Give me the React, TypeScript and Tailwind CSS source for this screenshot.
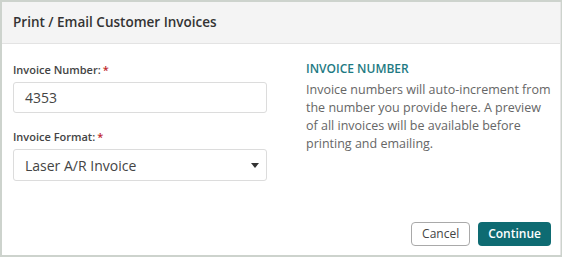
export default function App() {
  return (
    <div className="w-[562px] h-[257px] bg-[#cdd3cd] p-[2px] pr-[1px] pb-[2px]" style={{ fontFamily: '"Open Sans", "Liberation Sans", sans-serif' }}>
      <div className="h-full bg-white flex flex-col border-r border-[#e6e6e6]">
        {/* Header */}
        <div className="h-[42px] bg-[#f4f4f4] border-b border-[#e3e3e3] flex items-center px-[11px]">
          <h1 className="text-[13.5px] font-semibold text-[#333]">Print / Email Customer Invoices</h1>
        </div>

        <div className="flex-1 flex pl-[11px] pr-[6px] pt-[18px]">
          {/* Form */}
          <div className="w-[254px] flex flex-col">
            <label className="text-[11px] font-semibold text-[#444] leading-[16px]">
              Invoice Number:<span className="text-[#c0272d] ml-[2px]">*</span>
            </label>
            <div className="mt-[4px] h-[31px] border border-[#dcdcdc] rounded-[3px] flex items-center px-[11px] text-[14px] text-[#444]">
              4353
            </div>
            <label className="mt-[16px] text-[11px] font-semibold text-[#444] leading-[16px]">
              Invoice Format:<span className="text-[#c0272d] ml-[2px]">*</span>
            </label>
            <div className="mt-[4px] h-[32px] border border-[#dcdcdc] rounded-[3px] flex items-center justify-between pl-[11px] pr-[7px] text-[14px] text-[#444]">
              <span>Laser A/R Invoice</span>
              <svg width="8" height="5" viewBox="0 0 8 5">
                <path d="M0 0h8L4 5z" fill="#333" />
              </svg>
            </div>
          </div>

          {/* Help */}
          <div className="ml-[39px] flex-1">
            <h2 className="text-[12px] font-semibold text-[#1e7a83] leading-[16px] mt-[-1px]">INVOICE NUMBER</h2>
            <p className="mt-[4px] text-[12.5px] leading-[18px] text-[#666]">
              Invoice numbers will auto-increment from the number you provide here. A preview of all invoices will be available before printing and emailing.
            </p>
          </div>
        </div>

        {/* Footer */}
        <div className="flex justify-end gap-[8px] pr-[9px] pb-[9px]">
          <button className="h-[24px] px-[10px] border border-[#a9a9a9] rounded-[4px] bg-white text-[12px] text-[#444]">Cancel</button>
          <button className="h-[24px] px-[10px] rounded-[4px] bg-[#0e6b72] text-[12px] font-semibold text-white">Continue</button>
        </div>
      </div>
    </div>
  );
}
